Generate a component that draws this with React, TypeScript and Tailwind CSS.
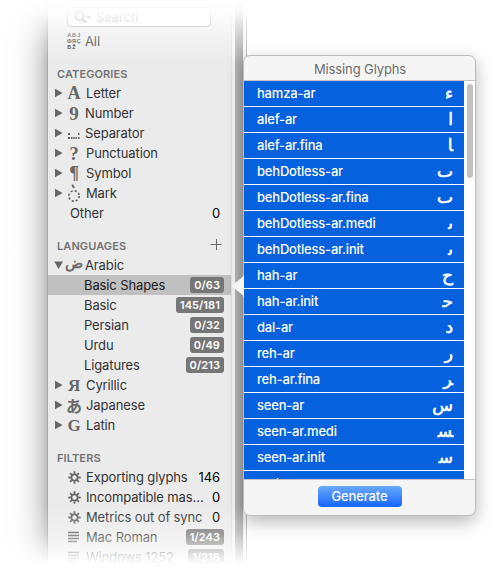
import React from "react";

const sans = "font-['Inter','Liberation_Sans',sans-serif]";
const serif = "font-['Liberation_Serif',serif] font-bold leading-none";

function Gear() {
  return (
    <svg width="13" height="13" viewBox="0 0 13 13" fill="none" stroke="#666" strokeWidth="1.8">
      <circle cx="6.5" cy="6.5" r="3.1" strokeWidth="1.7" />
      {[0, 45, 90, 135, 180, 225, 270, 315].map((a) => (
        <path key={a} d="M6.5 2.8V0.3" transform={`rotate(${a} 6.5 6.5)`} />
      ))}
    </svg>
  );
}

function Lines() {
  return (
    <svg width="12" height="12" viewBox="0 0 12 12" stroke="#555" strokeWidth="1.3">
      <path d="M0 1.5H11M0 4.5H11M0 7.5H11M0 10.5H9" />
    </svg>
  );
}

function Separator() {
  return (
    <svg width="12" height="8" viewBox="0 0 12 8" fill="#666" className="mt-[3px]">
      <path d="M0 2h2v2H0zM0 6h2v2H0zM3 6h1.5v2H3zM5.3 6H6.8v2H5.3zM7.6 6h1.4v2H7.6zM10 6h1.5v2H10zM10 2h1.5v2H10z" />
    </svg>
  );
}

function Mark() {
  return (
    <svg width="14" height="20" viewBox="0 0 14 20" fill="none" stroke="#666">
      <circle cx="7" cy="13" r="5.2" strokeWidth="1.7" strokeDasharray="2.1 1.984" />
      <path d="M5.2 1.6L7 5" strokeWidth="2" />
    </svg>
  );
}

function Badge({ children }: { children: React.ReactNode }) {
  return (
    <span className="flex h-4 items-center rounded-[3px] bg-[#767676] px-[4px] text-[11px] font-semibold tracking-[0.1px] text-white">
      {children}
    </span>
  );
}

function Triangle({ open = false }: { open?: boolean }) {
  return (
    <svg width="10" height="10" viewBox="0 0 10 10" fill="#666" className="shrink-0">
      <path d={open ? "M0.3 1.5H9L4.6 9Z" : "M1 0.8V9.2L8.6 5Z"} />
    </svg>
  );
}

function Branch({ icon, label, open, pad = "pl-[2px]" }: { icon: React.ReactNode; label: string; open?: boolean; pad?: string }) {
  return (
    <div className="flex h-5 items-center pl-1.5">
      <Triangle open={open} />
      <span className="flex h-5 w-[20px] shrink-0 items-center justify-center text-[#686868]">{icon}</span>
      <span className={pad}>{label}</span>
    </div>
  );
}

function Leaf({ label, count, selected }: { label: string; count: string; selected?: boolean }) {
  return (
    <div className={`flex h-5 items-center justify-between pl-9 pr-[7px] ${selected ? "bg-[#c0c0c0] text-[#1c1c1c]" : ""}`}>
      <span>{label}</span>
      <Badge>{count}</Badge>
    </div>
  );
}

function Filter({ icon, label, count, badge }: { icon: React.ReactNode; label: string; count: string; badge?: boolean }) {
  return (
    <div className={`flex h-5 items-center pl-5 ${badge ? "pr-[7px]" : "pr-[11px]"}`}>
      <span className="w-[18px] shrink-0">{icon}</span>
      <span className="grow whitespace-nowrap">{label}</span>
      {badge ? <Badge>{count}</Badge> : <span className="text-black">{count}</span>}
    </div>
  );
}

function Heading({ children }: { children: React.ReactNode }) {
  return <div className="h-5 text-[11px] leading-[22px] font-semibold tracking-[0.1px] text-[#737373]">{children}</div>;
}

const glyphs: [string, string][] = [
  ["hamza-ar", "ء"],
  ["alef-ar", "ا"],
  ["alef-ar.fina", "\uFE8E"],
  ["behDotless-ar", "ٮ"],
  ["behDotless-ar.fina", "ٮ"],
  ["behDotless-ar.medi", "ٮ\u200D"],
  ["behDotless-ar.init", "ٮ\u200D"],
  ["hah-ar", "ح"],
  ["hah-ar.init", "\uFEA3"],
  ["dal-ar", "د"],
  ["reh-ar", "ر"],
  ["reh-ar.fina", "\uFEAE"],
  ["seen-ar", "س"],
  ["seen-ar.medi", "\uFEB4"],
  ["seen-ar.init", "\uFEB3"],
  ["sad-ar", ""],
];

function Sidebar() {
  return (
    <div className="w-[184px] shrink-0 border-l border-[#aaa] bg-[#ebebeb] text-[13px] leading-5 tracking-[-0.12px] text-[#333]">
      <div className="h-[27px] pl-[19px] pt-[7px]">
        <div className="flex h-5 w-[144px] items-center rounded-[4px] border border-[#999] bg-white pl-[6px] text-[#999]">
          <svg width="19" height="14" viewBox="0 0 19 14" fill="none" stroke="#666" strokeWidth="1.3">
            <circle cx="5.5" cy="6" r="4.3" />
            <path d="M8.7 9.2L12 12.5M12.5 5.5l2 2 2-2" />
          </svg>
          <span className="pl-[3px]">Search</span>
        </div>
      </div>
      <div className="mt-1 flex h-5 items-center pl-[19px]">
        <span className="grid w-[14px] grid-cols-3 justify-items-center font-['Liberation_Sans',sans-serif] text-[5.5px] leading-[6px] font-bold tracking-normal text-[#333]">
          {["A", "B", "J", "Ф", "Я", "Ç", "Б", "Ž"].map((c) => (
            <span key={c}>{c}</span>
          ))}
        </span>
        <span className="pl-1">All</span>
      </div>
      <div className="mt-3 pl-[9px]">
        <Heading>CATEGORIES</Heading>
      </div>
      <Branch icon={<span className={`${serif} text-[18px]`}>A</span>} label="Letter" />
      <Branch icon={<span className={`${serif} text-[19px]`}>9</span>} label="Number" pad="pl-[1px]" />
      <Branch icon={<Separator />} label="Separator" pad="pl-[1px]" />
      <Branch icon={<span className={`${serif} text-[19px]`}>?</span>} label="Punctuation" />
      <Branch icon={<span className={`${serif} text-[18px]`}>¶</span>} label="Symbol" />
      <Branch icon={<Mark />} label="Mark" />
      <div className="flex h-5 items-center justify-between pl-[22px] pr-[11px]">
        <span>Other</span>
        <span className="text-black">0</span>
      </div>
      <div className="mt-3 flex h-5 items-center justify-between pl-[9px] pr-[9px]">
        <Heading>LANGUAGES</Heading>
        <svg width="12" height="12" viewBox="0 0 12 12" stroke="#666" className="mb-[3px]">
          <path d="M0.5 6.5H11.5M6.5 1V12" />
        </svg>
      </div>
      <Branch open icon={<span className="-mt-1 font-['DejaVu_Sans',sans-serif] text-[15px] leading-none [-webkit-text-stroke:0.5px_#686868]">ض</span>} label="Arabic" pad="pl-[1px]" />
      <Leaf label="Basic Shapes" count="0/63" selected />
      <Leaf label="Basic" count="145/181" />
      <Leaf label="Persian" count="0/32" />
      <Leaf label="Urdu" count="0/49" />
      <Leaf label="Ligatures" count="0/213" />
      <Branch icon={<span className={`${serif} text-[17px]`}>Я</span>} label="Cyrillic" />
      <Branch icon={<span className="font-['Noto_Sans_CJK_JP',sans-serif] text-[16px] leading-none font-bold">あ</span>} label="Japanese" />
      <Branch icon={<span className={`${serif} text-[17px]`}>G</span>} label="Latin" />
      <div className="mt-3 pl-[9px]">
        <Heading>FILTERS</Heading>
      </div>
      <Filter icon={<Gear />} label="Exporting glyphs" count="146" />
      <Filter icon={<Gear />} label="Incompatible mas…" count="0" />
      <Filter icon={<Gear />} label="Metrics out of sync" count="0" />
      <Filter icon={<Lines />} label="Mac Roman" count="1/243" badge />
      <Filter icon={<Lines />} label="Windows 1252" count="1/218" badge />
    </div>
  );
}

function Popover() {
  return (
    <div className="absolute top-[55px] left-[243px] z-20 w-[233px]">
      <div className="flex h-[461px] flex-col overflow-hidden rounded-[7px] border border-[#bcbcbc] bg-[#f5f5f5] shadow-[0_6px_18px_rgba(0,0,0,0.28)]">
        <div className="h-[25px] shrink-0 border-b border-[#c4c4c4] pl-px text-center text-[13px] leading-[27px] tracking-[-0.12px] text-[#6e6e6e]">Missing Glyphs</div>
        <div className="flex h-[398px] shrink-0 overflow-hidden bg-white">
          <div className="w-[220px]">
            {glyphs.map(([name, glyph]) => (
              <div key={name} className="flex h-[26px] items-center justify-between border-b border-white bg-[#0561de] pr-[11px] pl-[13px] text-[13px] font-medium tracking-[-0.2px] text-white">
                <span>{name}</span>
                <span className="pb-[2px] font-['DejaVu_Sans',sans-serif] text-[17px] leading-[22px] tracking-normal [-webkit-text-stroke:0.6px_white]" dir="rtl">{glyph}</span>
              </div>
            ))}
          </div>
          <div className="pt-[3px] pl-[3px]">
            <div className="h-[94px] w-[6px] rounded-full bg-[#c2c2c2]" />
          </div>
        </div>
        <div className="flex grow items-start justify-center border-t border-[#c4c4c4] pt-[6px]">
          <div className="h-[21px] w-[84px] rounded-[4px] bg-linear-to-b from-[#6aa9ff] to-[#0b62fb] text-center text-[13px] leading-[21px] font-medium tracking-[-0.15px] text-white">Generate</div>
        </div>
      </div>
      <svg width="12" height="24" viewBox="0 0 12 24" className="absolute top-[219px] left-[-11px]" fill="#f5f5f5">
        <path d="M12 0C12 4 0 10 0 12S12 20 12 24Z" />
      </svg>
    </div>
  );
}

export default function App() {
  return (
    <div className={`relative flex h-[570px] w-[494px] overflow-hidden bg-white ${sans}`}>
      <div className="w-[47px] shrink-0 bg-[linear-gradient(to_right,#fff_0%,#fcfcfc_35%,#efefef_65%,#d5d5d5_88%,#bdbdbd_100%)]" />
      <Sidebar />
      <div className="w-1 shrink-0 border-l border-[#e1e1e1] bg-[#f4f4f4]" />
      <div className="w-2 shrink-0 bg-[linear-gradient(to_right,#b8b8b8,#a7a7a7)]" />
      <div className="w-1 shrink-0 border-r border-[#b5b5b5] bg-[#f5f5f5]" />
      <div className="pointer-events-none absolute inset-x-0 top-0 z-10 h-[62px] bg-[linear-gradient(to_bottom,#fff_0%,rgba(255,255,255,.88)_22%,rgba(255,255,255,.5)_50%,rgba(255,255,255,.2)_75%,transparent_100%)]" />
      <div className="pointer-events-none absolute inset-x-0 bottom-0 z-10 h-[65px] bg-[linear-gradient(to_bottom,transparent_0%,rgba(255,255,255,.28)_45%,rgba(255,255,255,.8)_77%,#fff_91%)]" />
      <Popover />
    </div>
  );
}
